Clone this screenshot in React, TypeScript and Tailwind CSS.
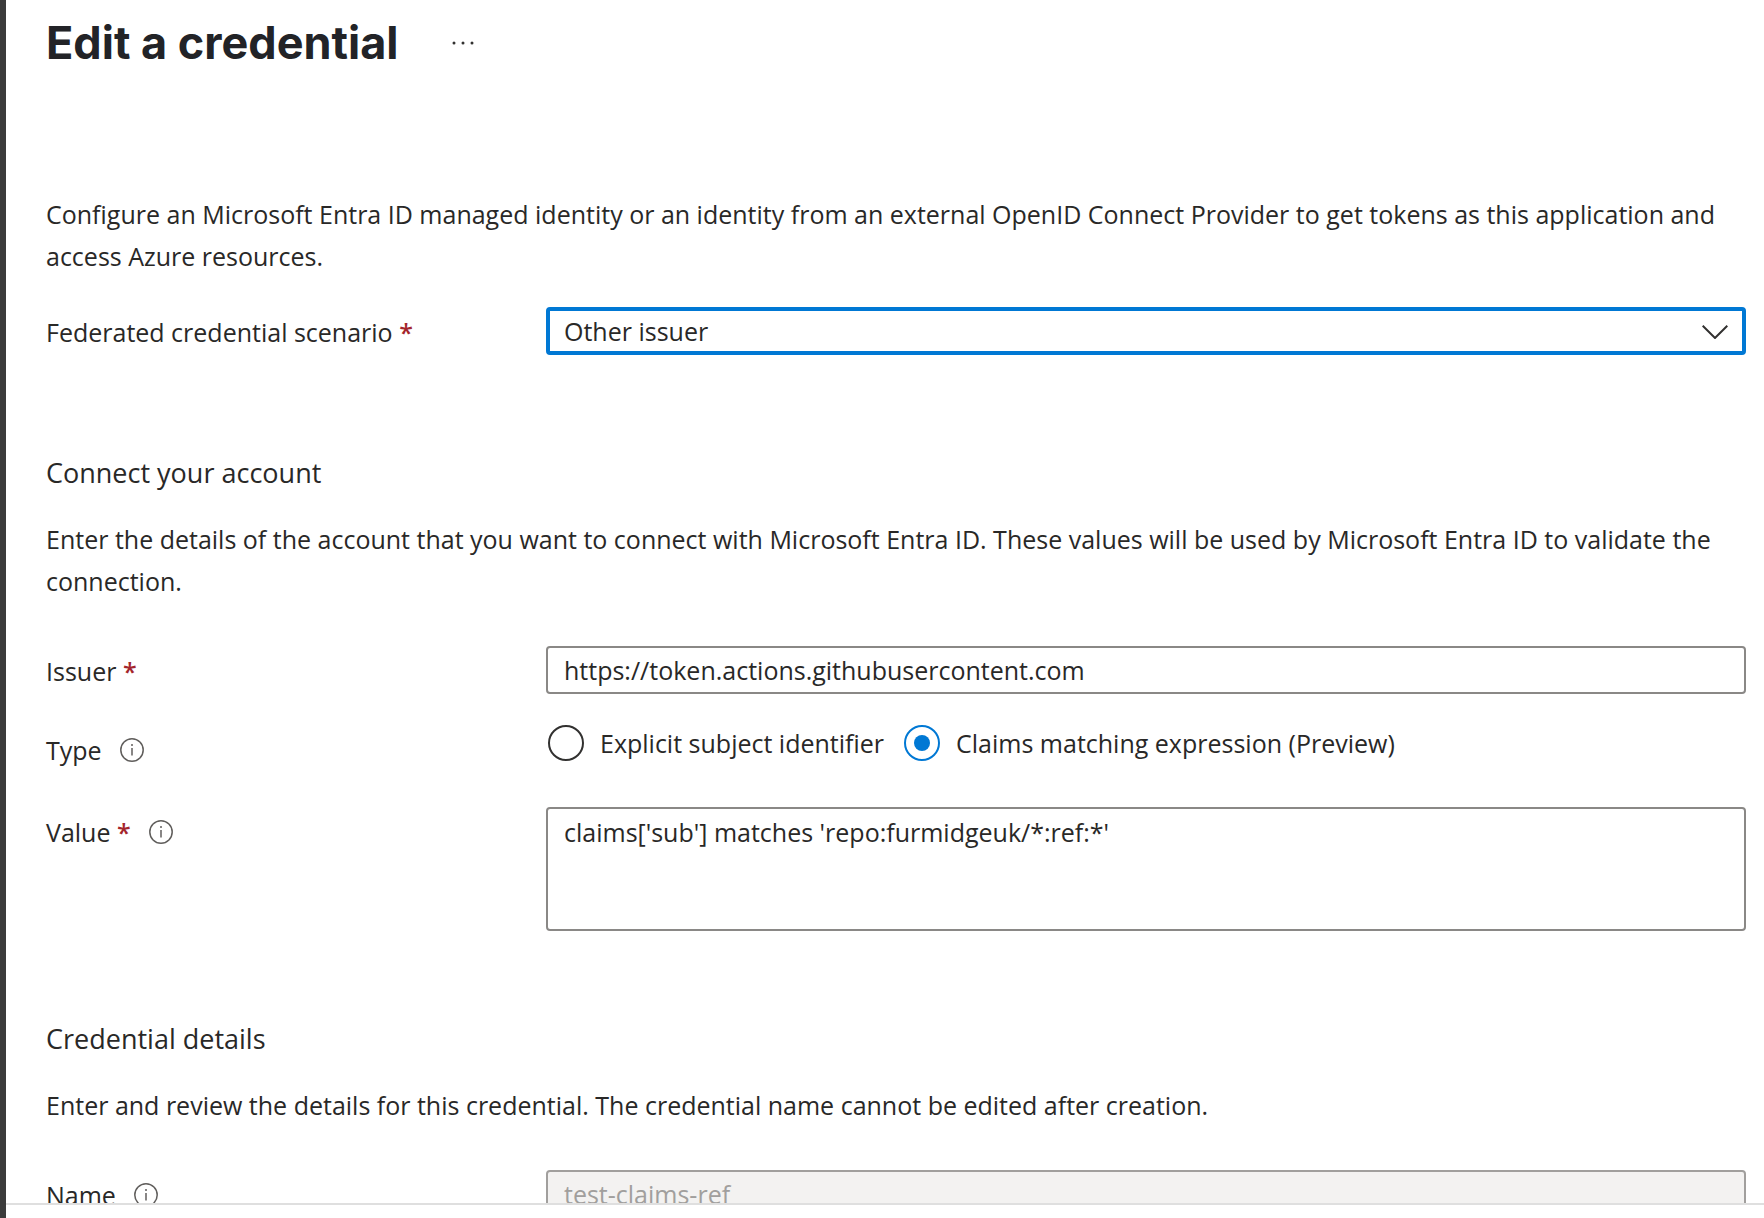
import React, { useState } from 'react';

interface FieldLabelProps {
  htmlFor?: string;
  id?: string;
  text: string;
  required?: boolean;
  info?: boolean;
}

const InfoIcon = () => (
  <svg viewBox="0 0 24 24" className="w-6 h-6" fill="none" stroke="#605e5c" aria-hidden="true">
    <circle cx="12" cy="12" r="11.2" strokeWidth="1.5" />
    <path d="M12 10v7.5" strokeWidth="1.5" />
    <circle cx="12" cy="7" r="1" fill="#605e5c" stroke="none" />
  </svg>
);

const FieldLabel = ({ htmlFor, id, text, required, info }: FieldLabelProps) => (
  <div className="flex items-center pt-1 self-start">
    <label id={id} htmlFor={htmlFor}>
      {text}
      {required && <span className="text-[#a4262c] font-semibold"> *</span>}
    </label>
    {info && (
      <button type="button" aria-label={`About ${text}`} className="ml-[18px]">
        <InfoIcon />
      </button>
    )}
  </div>
);

const types = [
  { id: 'explicit', label: 'Explicit subject identifier' },
  { id: 'claims', label: 'Claims matching expression (Preview)' }
];

const App = () => {
  const [scenario, setScenario] = useState('other');
  const [issuer, setIssuer] = useState('https://token.actions.githubusercontent.com');
  const [type, setType] = useState('claims');
  const [value, setValue] = useState("claims['sub'] matches 'repo:furmidgeuk/*:ref:*'");

  return (
    <div className="h-screen flex flex-col overflow-hidden bg-white border-l-6 border-[#3b3b3b] text-[25px] leading-[42px] text-[#292827] font-['Open_Sans',sans-serif]">
      <main className="flex-1 min-h-0 overflow-hidden pl-10 pr-[18px]">
        <header className="flex items-center h-[86px]">
          <h1 className="font-['Inter',sans-serif] text-[45px] font-bold text-[#222327]">Edit a credential</h1>
          <button type="button" aria-label="More actions" className="ml-[52px]">
            <svg viewBox="0 0 24 6" className="w-6 h-1.5" fill="#323130">
              <circle cx="3" cy="3" r="1.5" />
              <circle cx="12" cy="3" r="1.5" />
              <circle cx="21" cy="3" r="1.5" />
            </svg>
          </button>
        </header>

        <p className="mt-[107px]">
          Configure an Microsoft Entra ID managed identity or an identity from an external OpenID Connect Provider to get tokens as this application and access Azure resources.
        </p>

        <div className="mt-[30px] grid grid-cols-[500px_1fr]">
          <FieldLabel htmlFor="scenario" text="Federated credential scenario" required />
          <div className="relative h-12">
            <select
              id="scenario"
              value={scenario}
              onChange={(e) => setScenario(e.target.value)}
              className="block w-full h-12 appearance-none rounded-sm border-4 border-[#0078d4] bg-white px-3.5 leading-10 outline-none"
            >
              <option value="other">Other issuer</option>
            </select>
            <svg viewBox="0 0 26 14" className="absolute right-[18px] top-[18px] w-[26px] h-3.5 pointer-events-none" fill="none" stroke="#323130" strokeWidth="2">
              <path d="M.7.7 13 13 25.3.7" />
            </svg>
          </div>
        </div>

        <section>
          <h2 className="mt-[97px] text-[27px]">Connect your account</h2>
          <p className="mt-6">
            Enter the details of the account that you want to connect with Microsoft Entra ID. These values will be used by Microsoft Entra ID to validate the connection.
          </p>

          <div className="mt-11 grid grid-cols-[500px_1fr]">
            <FieldLabel htmlFor="issuer" text="Issuer" required />
            <input
              id="issuer"
              type="text"
              value={issuer}
              onChange={(e) => setIssuer(e.target.value)}
              className="w-full h-12 rounded-sm border-2 border-[#8a8886] px-4 outline-none"
            />
          </div>

          <div className="mt-[31px] grid grid-cols-[500px_1fr]">
            <FieldLabel id="type-label" text="Type" info />
            <div role="radiogroup" aria-labelledby="type-label" className="flex items-start gap-5 pl-0.5 leading-9">
              {types.map((item) => (
                <label key={item.id} className="flex items-center gap-4">
                  <input
                    type="radio"
                    name="type"
                    checked={type === item.id}
                    onChange={() => setType(item.id)}
                    className="appearance-none grid place-items-center w-9 h-9 rounded-full border-2 border-[#323130] checked:border-[#0078d4] before:w-4 before:h-4 before:rounded-full checked:before:bg-[#0078d4]"
                  />
                  {item.label}
                </label>
              ))}
            </div>
          </div>

          <div className="mt-9 grid grid-cols-[500px_1fr]">
            <FieldLabel htmlFor="value" text="Value" required info />
            <textarea
              id="value"
              value={value}
              onChange={(e) => setValue(e.target.value)}
              className="block w-full h-[124px] resize-none rounded-sm border-2 border-[#8a8886] px-4 py-0.5 outline-none"
            />
          </div>
        </section>

        <section>
          <h2 className="mt-[87px] text-[27px]">Credential details</h2>
          <p className="mt-6">
            Enter and review the details for this credential. The credential name cannot be edited after creation.
          </p>

          <div className="mt-11 grid grid-cols-[500px_1fr]">
            <FieldLabel htmlFor="name" text="Name" info />
            <input
              id="name"
              type="text"
              disabled
              value="test-claims-ref"
              className="w-full h-12 rounded-sm border-2 border-[#a19f9d] bg-[#f3f2f1] px-4 text-[#a19f9d]"
            />
          </div>
        </section>
      </main>

      <footer className="h-[15px] border-t-2 border-[#dfdfdf]" />
    </div>
  );
};

export default App;
